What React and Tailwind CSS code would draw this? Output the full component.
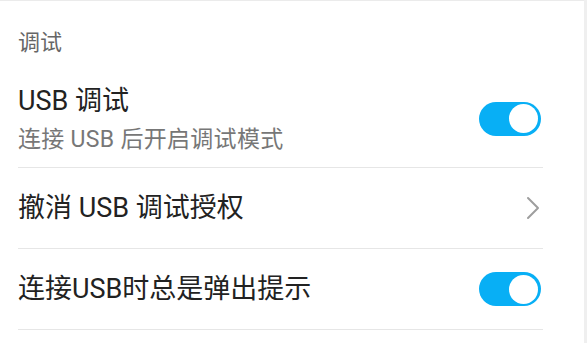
import React from "react";

function Toggle() {
  return (
    <div className="relative w-[62px] h-[34px] rounded-full bg-[#08aff5] shrink-0">
      <div className="absolute right-[3px] top-[2.5px] w-[29px] h-[29px] rounded-full bg-white" />
    </div>
  );
}

function Chevron() {
  return (
    <svg width="14" height="24" viewBox="0 0 14 24" className="shrink-0">
      <path d="M2 2 L12 12 L2 22" fill="none" stroke="#9e9e9e" strokeWidth="2" strokeLinecap="round" strokeLinejoin="round" />
    </svg>
  );
}

export default function App() {
  return (
    <div
      className="w-[587px] h-[343px] bg-white flex overflow-hidden"
      style={{ fontFamily: 'Roboto, "Noto Sans CJK SC", sans-serif' }}
    >
      <div className="w-[584px] h-full border-t border-[#ebebeb] flex flex-col">
        <div className="h-[69px] pt-[14px] px-[18px] flex items-center text-[22px] text-[#666666]">
          调试
        </div>
        <div className="h-[98px] ml-[18px] mr-[41px] pr-[2px] border-b border-[#e6e6e6] flex items-center justify-between">
          <div className="flex flex-col">
            <div className="text-[27px] leading-[36px] text-[#222222]">USB 调试</div>
            <div className="mt-[6px] text-[23px] leading-[30px] text-[#777777] tracking-[0.3px]">连接 USB 后开启调试模式</div>
          </div>
          <Toggle />
        </div>
        <div className="h-[81px] ml-[18px] mr-[41px] pr-[3px] border-b border-[#e6e6e6] flex items-center justify-between">
          <div className="text-[27px] leading-[36px] text-[#222222]">撤消 USB 调试授权</div>
          <Chevron />
        </div>
        <div className="h-[81px] ml-[18px] mr-[41px] pr-[2px] border-b border-[#e6e6e6] flex items-center justify-between">
          <div className="text-[27px] leading-[36px] text-[#222222]">连接USB时总是弹出提示</div>
          <Toggle />
        </div>
      </div>
      <div className="w-[3px] h-full bg-[#efefef]" />
    </div>
  );
}
